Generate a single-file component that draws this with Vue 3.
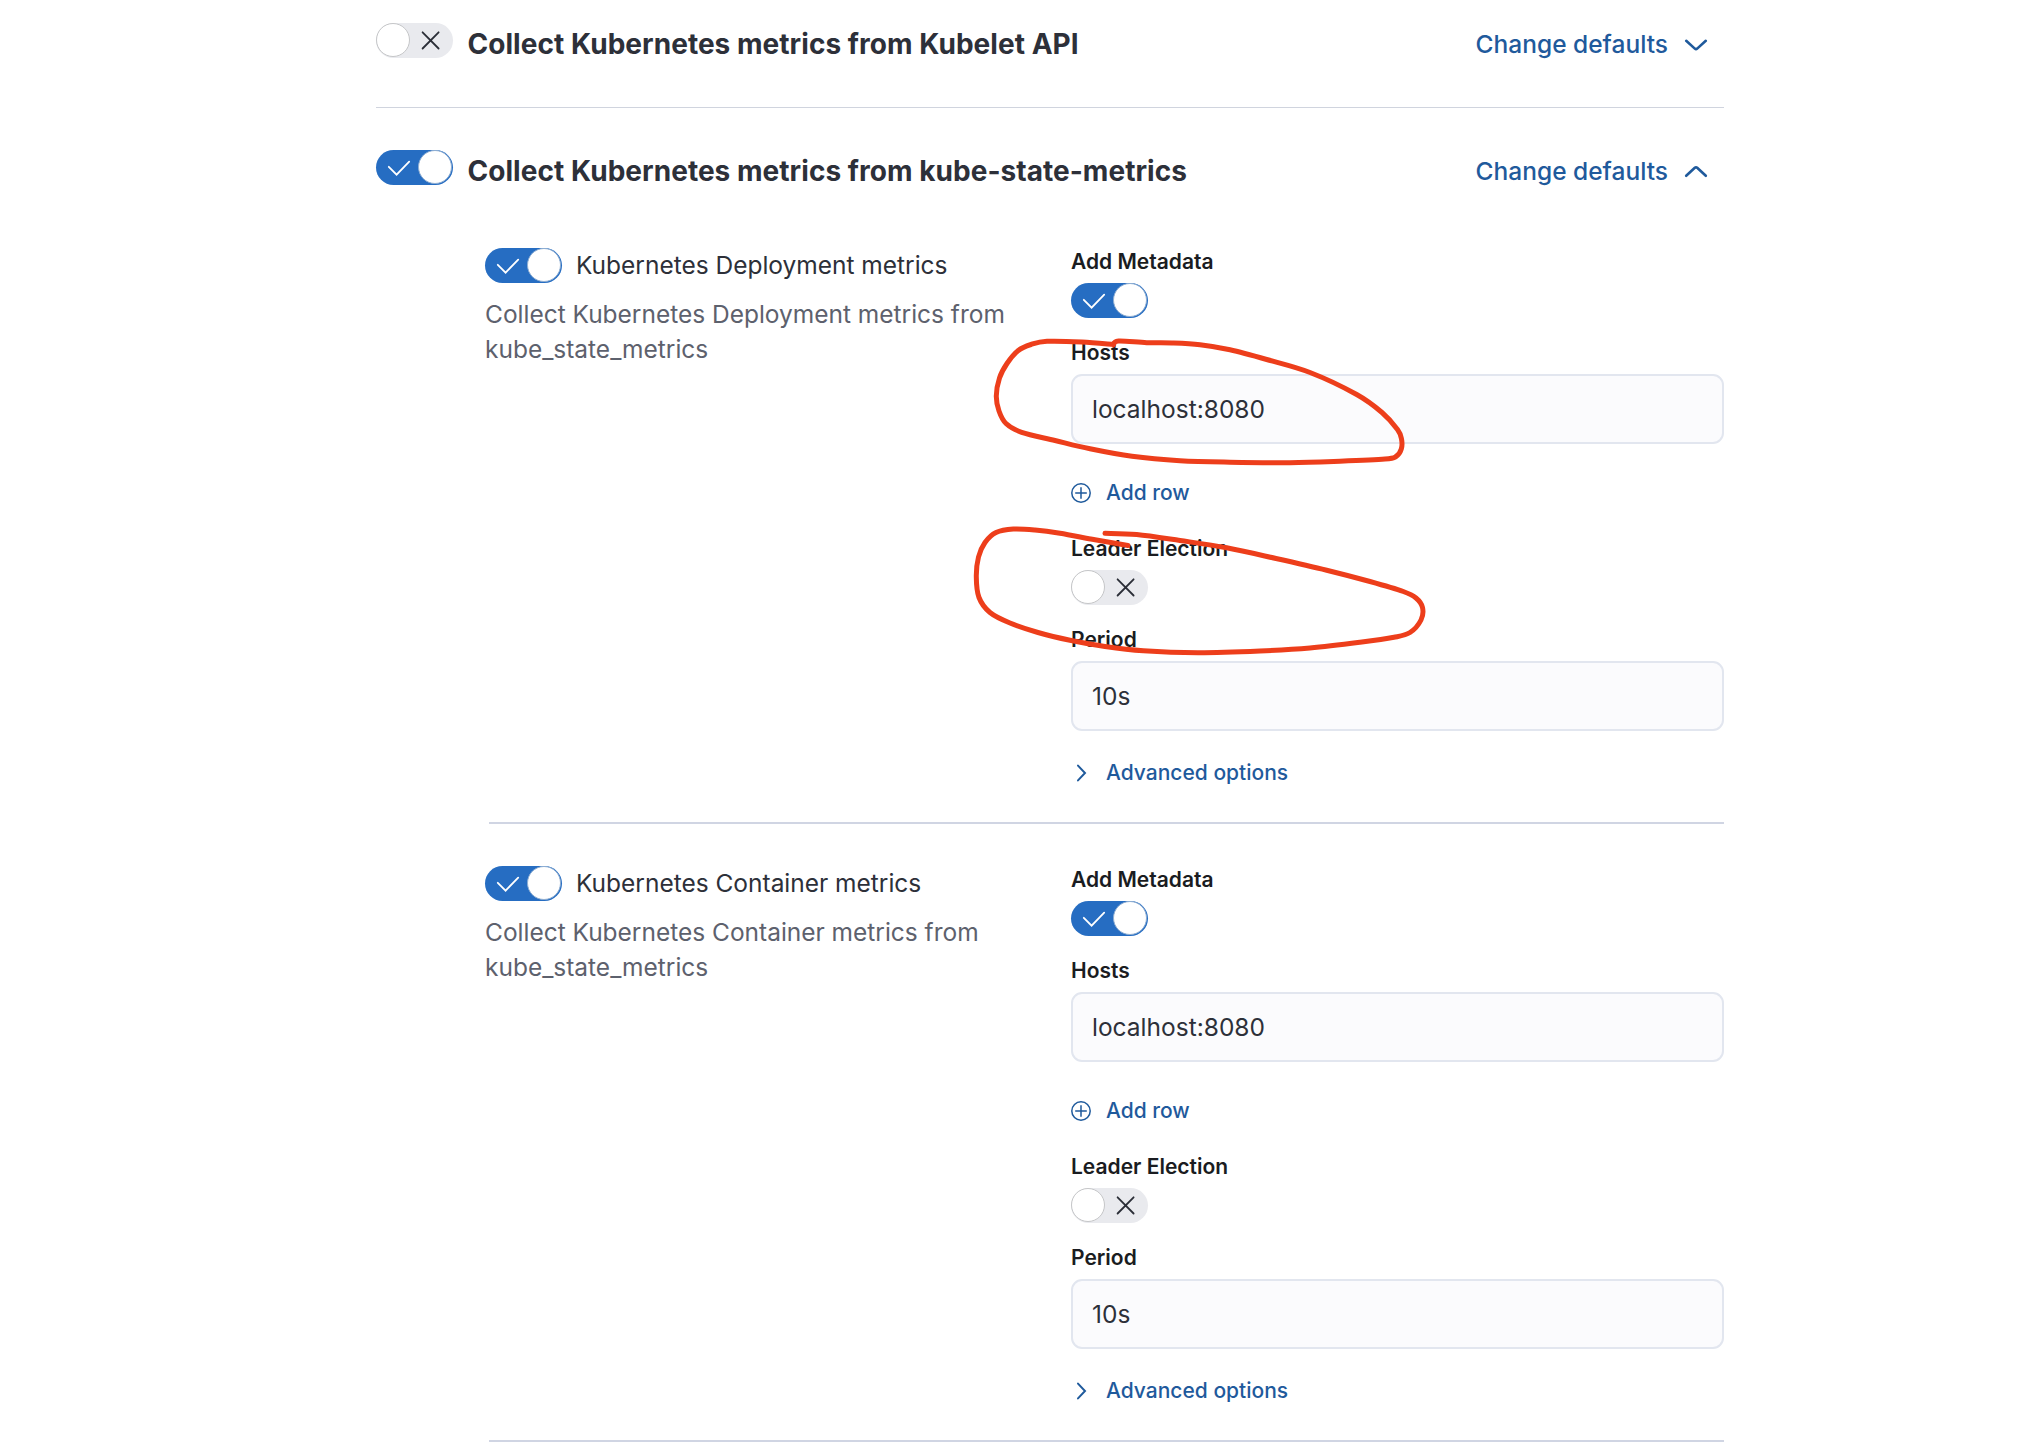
<script setup>
import { h } from 'vue'

const streams = ['Deployment', 'Container']

const Toggle = (props) =>
  h('span', { class: ['toggle', { on: props.on }], role: 'switch', 'aria-checked': !!props.on }, [
    h('svg', { class: 'glyph', viewBox: '0 0 77 35' }, [
      props.on
        ? h('path', { d: 'M12.8 16.8l7.8 7.8L33.2 11.6', stroke: '#fff' })
        : h('path', { d: 'M46.6 9.3l16 16.2M62.6 9.3L46.6 25.5', stroke: '#2b2e37' }),
    ]),
    h('span', { class: 'thumb' }),
  ])
Toggle.props = { on: Boolean }

// Smooth freehand stroke through a list of points (Catmull-Rom to Bezier)
function stroke(p) {
  let d = `M${p[0][0]} ${p[0][1]}`
  for (let i = 0; i < p.length - 1; i++) {
    const a = p[i - 1] || p[i]
    const b = p[i]
    const c = p[i + 1]
    const e = p[i + 2] || c
    d += `C${b[0] + (c[0] - a[0]) / 6} ${b[1] + (c[1] - a[1]) / 6} ${c[0] - (e[0] - b[0]) / 6} ${c[1] - (e[1] - b[1]) / 6} ${c[0]} ${c[1]}`
  }
  return d
}

const marks = [
  stroke([
    [1113.5, 344.5], [1082, 342], [1047, 341.3], [1031, 344.5], [1018, 350.7], [1007, 363.5], [999.5, 378], [996.3, 396],
    [999, 411], [1006, 423.5], [1021.7, 432.3], [1055, 440.5], [1090, 448.8], [1132, 456.3], [1180, 460.7], [1230, 462.2],
    [1290, 462.7], [1340, 461.2], [1385, 459], [1396, 456.5], [1401.3, 449], [1401.5, 439], [1397.5, 429.5], [1382, 412.5],
    [1356.7, 394.5], [1310, 372.5], [1266.7, 359.5], [1230, 349.8], [1200, 344.8], [1172, 343], [1146.7, 342.7], [1118.5, 341],
    [1113.5, 345],
  ]),
  stroke([
    [1105, 533.3], [1136.7, 534.5], [1180, 540.5], [1226.7, 547.8], [1276, 558.5], [1326.7, 570.2], [1370, 581.5], [1403.3, 591.5],
    [1416, 598], [1422.5, 607.5], [1421, 620], [1410, 632.5], [1394, 637.3], [1360, 642.3], [1310, 648], [1260, 651],
    [1198, 652.7], [1143.3, 650.8], [1105, 646.5], [1070, 640.3], [1038, 632.5], [1010, 623], [990, 612.5], [979, 597.5],
    [976.3, 576.7], [978.5, 557], [985, 542.5], [996, 532.5], [1013.3, 529], [1035, 530], [1060, 533.3], [1095, 539.8],
    [1128, 545.5],
  ]),
]
</script>

<template>
  <main class="page">
    <section class="group collapsed">
      <Toggle />
      <h2>Collect Kubernetes metrics from Kubelet API</h2>
      <a class="defaults">Change defaults
        <svg width="28" height="28" viewBox="0 0 28 28"><path d="M4.2 9.8l8.6 7.8q1.2 1 2.4 0l8.6-7.8" /></svg>
      </a>
    </section>
    <section class="group">
      <Toggle on />
      <h2>Collect Kubernetes metrics from kube-state-metrics</h2>
      <a class="defaults">Change defaults
        <svg width="28" height="28" viewBox="0 0 28 28"><path d="M4.2 17.8l8.6-8q1.2-1 2.4 0l8.6 8" /></svg>
      </a>
    </section>

    <article v-for="name in streams" :key="name" class="stream">
      <div class="about">
        <div class="name"><Toggle on /><span>Kubernetes {{ name }} metrics</span></div>
        <p>Collect Kubernetes {{ name }} metrics from kube_state_metrics</p>
      </div>
      <div class="form">
        <label>Add Metadata</label>
        <Toggle on />
        <label class="next">Hosts</label>
        <div class="field">localhost:8080</div>
        <a class="action add">
          <svg width="20" height="20" viewBox="0 0 20 20"><circle cx="10" cy="10" r="9.2" /><path d="M10 4.2v11.6M4.2 10h11.6" /></svg>
          Add row
        </a>
        <label>Leader Election</label>
        <Toggle />
        <label class="next">Period</label>
        <div class="field">10s</div>
        <a class="action advanced">
          <svg width="20" height="20" viewBox="0 0 20 20"><path class="bold" d="M7 2.6l7 7.4-7 7.4" /></svg>
          Advanced options
        </a>
      </div>
    </article>

    <svg class="marks" width="2028" height="1442"><path v-for="d in marks" :key="d" :d="d" /></svg>
  </main>
</template>

<style>
body { margin: 0; background: #fff; overflow: hidden; }
.toggle { position: relative; display: block; flex: none; width: 77px; height: 35px; border-radius: 18px; background: #e9eaee; }
.toggle.on { background: #266dc2; }
.toggle .glyph { display: block; width: 77px; height: 35px; fill: none; stroke-width: 1.8; stroke-linecap: round; }
.toggle .thumb { position: absolute; left: 0; top: 0; box-sizing: border-box; width: 34px; height: 34px; border: 1px solid #c5c6c8; border-radius: 50%; background: #fff; }
.toggle.on .thumb { left: 42px; border-color: #8faed2; }
</style>

<style scoped>
.page { position: relative; box-sizing: border-box; width: 2028px; height: 1442px; padding: 0 304px 0 376px; overflow: hidden; font-family: Inter, "Liberation Sans", sans-serif; font-size: 24.5px; line-height: 35px; color: #2d3039; }
.group { display: flex; align-items: flex-start; box-sizing: border-box; height: 140px; padding-top: 42px; }
.group.collapsed { height: 108px; padding-top: 23px; border-bottom: 1px solid #d0d4de; }
h2 { flex: 1; margin: 4px 0 0 14.5px; font-size: 28px; font-weight: 700; line-height: 35px; letter-spacing: 0.04px; }
.defaults { display: flex; align-items: center; gap: 14px; margin: 4px 14px 0 0; font-weight: 500; color: #1f5a9c; }
.defaults svg { fill: none; stroke: currentColor; stroke-width: 2.6; stroke-linecap: round; }
.stream { display: flex; box-sizing: border-box; height: 576px; margin: 0 0 42px 113px; border-bottom: 2px solid #d0d5e3; }
.about { flex: none; width: 586px; margin-left: -4px; letter-spacing: -0.015px; }
.name { display: flex; gap: 14px; }
.about p { width: 530px; margin: 14px 0 0; color: #5d616d; }
.form { flex: 1; }
label { display: block; height: 21px; padding-top: 3px; margin-bottom: 11px; font-size: 21px; font-weight: 600; line-height: 21px; color: #1a1c21; }
label.next { margin-top: 21px; }
.field { box-sizing: border-box; height: 70px; padding: 0 19px; border: 2px solid #e2e6ef; border-radius: 11px; background: #fbfbfd; line-height: 66px; }
.action { display: flex; align-items: center; gap: 15px; height: 28px; font-size: 21px; font-weight: 500; line-height: 28px; color: #1f5a9c; }
.action svg { fill: none; stroke: currentColor; stroke-width: 1.5; }
.action .bold { stroke-width: 2; stroke-linecap: round; }
.add { margin: 35px 0 28px; }
.advanced { margin-top: 28px; }
.marks { position: absolute; left: 0; top: 0; pointer-events: none; }
.marks path { fill: none; stroke: #ed3e1b; stroke-width: 5; stroke-linecap: round; stroke-linejoin: round; }
</style>
